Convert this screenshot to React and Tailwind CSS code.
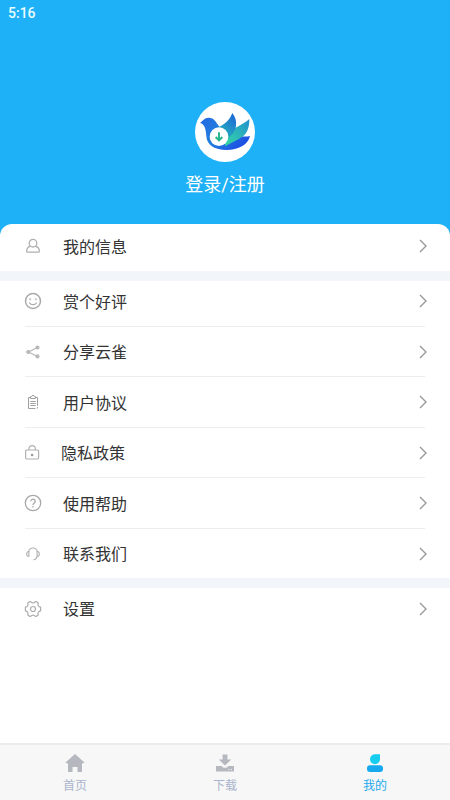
import React from 'react';

const UserIcon = () => (
    <svg width="18" height="18" viewBox="0 0 18 18" fill="none" stroke="#b0b0b0" strokeWidth="1.3" strokeLinejoin="round">
        <path d="M6.6 9.2C3.8 10 2.6 11.800 2.6 14.300c0 .5.3.8.8.8h11.200c.5 0 .8-.3.8-.8 0-2.500-1.200-4.300-4-5.100" />
        <circle cx="9" cy="6.2" r="3.800" />
    </svg>
);

const SmileIcon = () => (
    <svg width="18" height="18" viewBox="0 0 18 18" fill="none" stroke="#aaaaaa" strokeWidth="1.5" strokeLinecap="round">
        <circle cx="9" cy="9" r="7.5" />
        <path d="M5.5 11c1.6 2.2 5.4 2.2 7 0" strokeWidth="1.2" />
        <circle cx="6.2" cy="7.2" r="0.3" />
        <circle cx="11.8" cy="7.2" r="0.3" />
    </svg>
);

const ShareIcon = () => (
    <svg width="18" height="18" viewBox="0 0 18 18" fill="#b8b8b8" stroke="#b8b8b8" strokeWidth="1.3">
        <path d="M13.5 4.5 4.5 9l9 4.5" fill="none" />
        <circle cx="13.5" cy="4.5" r="1.4" />
        <circle cx="4.2" cy="9" r="1.4" />
        <circle cx="13.5" cy="13.4" r="1.4" />
    </svg>
);

const ClipboardIcon = () => (
    <svg width="18" height="18" viewBox="0 0 18 18" fill="none" stroke="#a0a0a0" strokeWidth="1">
        <path d="M6.5 4.5h-2v11h7M11.5 4.5h2v8.3M13.5 14v1.500" />
        <path d="M6.5 5.5V3.6h1.2a1.3 1.3 0 0 1 2.6 0h1.2v1.9z" />
        <path d="M6.3 8.5h5.400M6.300 10.500h5.400M6.300 12.500h5.400" />
    </svg>
);

const LockIcon = () => (
    <svg width="18" height="18" viewBox="0 0 18 18" fill="none" stroke="#b0b0b0" strokeWidth="1.2">
        <rect x="1.6" y="6" width="13" height="9" rx="1.2" />
        <path d="M4.9 6V4.800a3.2 3.2 0 0 1 6.4 0v1.200" />
        <circle cx="8.1" cy="11" r="0.7" fill="#999999" stroke="#999999" />
    </svg>
);

const HelpIcon = () => (
    <svg width="18" height="18" viewBox="0 0 18 18" fill="none" stroke="#a8a8a8" strokeWidth="1.3">
        <circle cx="9" cy="9" r="7.7" />
        <path d="M6.8 7.3a2.2 2.2 0 1 1 3.5 1.8c-.8.6-1.3 1-1.3 2" />
        <path d="M9 12.1v1.3" />
    </svg>
);

const HeadsetIcon = () => (
    <svg width="18" height="18" viewBox="0 0 18 18" fill="none" stroke="#b0b0b0" strokeWidth="1.1" strokeLinecap="round">
        <path d="M4.6 6.500a4.600 4.900 0 0 1 8.8 0" />
        <path d="M4.9 6.500v4.800c-1.600 0-2.200-1.100-2.200-2.400s.6-2.400 2.200-2.400zM13.100 6.500v4.800c1.600 0 2.200-1.100 2.200-2.400s-.6-2.400-2.200-2.400z" />
        <path d="M13 11.600c-.4 1.900-1.400 3-3.200 3.200" />
    </svg>
);

const GearIcon = () => (
    <svg width="18" height="18" viewBox="0 0 18 18" fill="none" stroke="#adadad" strokeWidth="1.2" strokeLinejoin="round">
        <path d="M5.6 1.7h1.2C7.7 3.3 10.3 3.3 11.2 1.7h1.200L14.3 3C13.4 4.9 14.5 6.9 16.6 7.2V10.8c-2.1.3-3.2 2.3-2.3 4.2l-1.9 1.3h-1.200c-.9-1.6-3.5-1.6-4.4 0H5.6L3.7 15c.9-1.9-.2-3.9-2.3-4.2V7.2C3.5 6.9 4.6 4.9 3.7 3z" />
        <circle cx="9" cy="9" r="2.5" />
    </svg>
);

const Chevron = () => (
    <svg width="10" height="14" viewBox="0 0 10 14" fill="none" stroke="#999999" strokeWidth="1.4">
        <path d="M2 1l6 6-6 6" />
    </svg>
);

const BirdLogo = () => (
    <svg width="60" height="60" viewBox="0 0 180 180">
        <defs>
            <linearGradient id="body" x1="0" y1="0" x2="1" y2="0.6">
                <stop offset="0" stopColor="#2468e4" />
                <stop offset="0.5" stopColor="#2380dc" />
                <stop offset="1" stopColor="#1c50e4" />
            </linearGradient>
            <linearGradient id="wing" x1="0.8" y1="0" x2="0.2" y2="1">
                <stop offset="0" stopColor="#1d68d8" />
                <stop offset="1" stopColor="#27c4b4" />
            </linearGradient>
            <linearGradient id="wingBack" x1="1" y1="0" x2="0.1" y2="0.9">
                <stop offset="0" stopColor="#2490d0" />
                <stop offset="1" stopColor="#31d3a6" />
            </linearGradient>
        </defs>
        <circle cx="90" cy="90" r="90" fill="#ffffff" />
        <path d="M15 62C23 59 25 48 41 47C57 47 63 60 73 74L96 120L132 105C144 102 156 105 165 102C160 128 130 144 94 144C60 144 35 130 34 102C33 84 30 67 15 62Z" fill="url(#body)" />
        <path d="M96 88C116 80 142 69 163 51C163 76 157 92 146 101C130 114 108 121 90 133Z" fill="url(#wingBack)" />
        <path d="M69 76C88 68 104 55 112 33C121 44 125 58 123 72C119 92 104 108 84 120Z" fill="url(#wing)" />
        <circle cx="72" cy="104" r="28" fill="#ffffff" />
        <path d="M72 91v24M62 105l10 10 10-10" fill="none" stroke="#27b58d" strokeWidth="6" />
    </svg>
);

const HomeIcon = () => (
    <svg width="20" height="20" viewBox="0 0 20 20" fill="#b5b8be">
        <path d="M10 1 19.2 9.3c.4.4.2 1-.4 1H17V18c0 .6-.4 1-1 1h-3.5v-5h-5v5H4c-.6 0-1-.4-1-1v-7.7H1.2c-.6 0-.8-.6-.4-1z" />
    </svg>
);

const DownloadIcon = () => (
    <svg width="20" height="20" viewBox="0 0 20 20" fill="#b5b8be">
        <path d="M7.6 1.5h4.800v5h3.800L10 12.600 3.800 6.500h3.800z" />
        <path d="M1 13h5.500l2 1.800h3l2-1.800H19v5.500H1zM13.500 16v1h1v-1zm2.500 0v1h1v-1z" fillRule="evenodd" />
    </svg>
);

const MineIcon = () => (
    <svg width="20" height="20" viewBox="0 0 20 20">
        <path d="M5 6.200A5 5 0 0 1 10 1.200h5v5a5 5 0 0 1-10 0z" fill="#16cdf0" />
        <rect x="2" y="12.300" width="16" height="6.700" rx="3" fill="#16a9ef" />
    </svg>
);

const groupItems = [
    { label: '赏个好评', icon: SmileIcon },
    { label: '分享云雀', icon: ShareIcon },
    { label: '用户协议', icon: ClipboardIcon },
    { label: '隐私政策', icon: LockIcon, tight: true },
    { label: '使用帮助', icon: HelpIcon },
    { label: '联系我们', icon: HeadsetIcon },
];

const tabs = [
    { label: '首页', icon: HomeIcon },
    { label: '下载', icon: DownloadIcon },
    { label: '我的', icon: MineIcon, active: true },
];

const MenuRow = ({ label, icon: Icon, tight }) => (
    <button className="flex h-10 w-full items-center pl-6 pr-[22px] text-left">
        <Icon />
        <span className={`flex-1 pt-[3px] text-base leading-6 text-[#333333] ${tight ? 'ml-[19px]' : 'ml-[21px]'}`}>{label}</span>
        <Chevron />
    </button>
);

const App = () => {
    return (
        <div className="flex h-[800px] w-[450px] flex-col overflow-hidden bg-[#1eb1f7] font-[Roboto,'Noto_Sans_CJK_SC',sans-serif]">
            <header className="flex h-56 shrink-0 flex-col">
                <div className="h-[26px] pl-2 pt-[3px] text-sm font-medium leading-5 text-[#e9fcff]">5:16</div>
                <div className="flex flex-col items-center pt-[75.5px]">
                    <BirdLogo />
                    <span className="mt-[9.5px] text-lg leading-7 text-white">登录/注册</span>
                </div>
            </header>

            <main className="flex-1 rounded-t-xl bg-white">
                <div className="h-[47px] pt-0.5">
                    <MenuRow label="我的信息" icon={UserIcon} />
                </div>
                <div className="h-2.5 bg-[#f2f6fa]" />
                <div className="h-[297px]">
                    {groupItems.map((item, index) => (
                        <div key={item.label}>
                            {index > 0 && <div className="mx-[25px] mb-[5px] mt-[4.5px] h-px bg-[#ededed]" />}
                            <MenuRow {...item} />
                        </div>
                    ))}
                </div>
                <div className="h-2.5 bg-[#f2f6fa]" />
                <div className="pt-[0.5px]">
                    <MenuRow label="设置" icon={GearIcon} />
                </div>
            </main>

            <nav className="flex h-[57px] shrink-0 border-t-2 border-[#ececec] bg-[#f7f7f7]">
                {tabs.map(({ label, icon: Icon, active }) => (
                    <button key={label} className="flex flex-1 flex-col items-center pt-2">
                        <Icon />
                        <span className={`mt-1 text-xs leading-[18px] ${active ? 'text-[#1ba9ee]' : 'text-[#a9b4cc]'}`}>{label}</span>
                    </button>
                ))}
            </nav>
        </div>
    );
};

export default App;
